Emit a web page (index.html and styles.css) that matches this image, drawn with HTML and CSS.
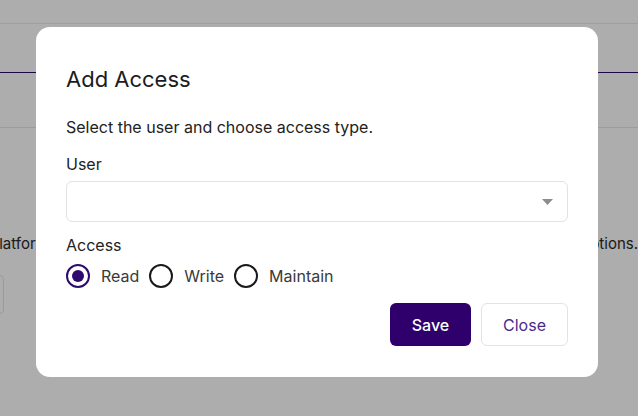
FILE: index.html
```html
<!DOCTYPE html>
<html>
<head>
<meta charset="utf-8">
<link rel="stylesheet" href="styles.css">
</head>
<body>
<div class="page">
  <div class="topbar"></div>
  <div class="tabs"></div>
  <div class="subbar"></div>
  <div class="intro">
    <span class="intro-left">platform to manage repository access</span>
    <span class="intro-right">settings and options.</span>
  </div>
  <div class="toolbar"><div class="ghost-btn"></div></div>
</div>
<div class="overlay">
  <div class="dialog">
    <h2 class="title">Add Access</h2>
    <p class="desc">Select the user and choose access type.</p>
    <label class="label">User</label>
    <div class="select">
      <svg class="caret" width="11" height="6" viewBox="0 0 11 6"><path d="M0 0h11L5.5 6z" fill="#8d8d8d"/></svg>
    </div>
    <label class="label label-access">Access</label>
    <div class="radios">
      <span class="radio checked"><span class="dot"></span></span><span class="rlabel">Read</span>
      <span class="radio"></span><span class="rlabel">Write</span>
      <span class="radio"></span><span class="rlabel">Maintain</span>
    </div>
    <div class="actions">
      <button class="btn btn-save">Save</button>
      <button class="btn btn-close">Close</button>
    </div>
  </div>
</div>
</body>
</html>
```

FILE: styles.css
```css
html, body {
  margin: 0;
  padding: 0;
  width: 638px;
  height: 416px;
  overflow: hidden;
  background: #ffffff;
  font-family: Inter, "Noto Sans", sans-serif;
}
.page {
  width: 638px;
  height: 416px;
  overflow: hidden;
}
.topbar {
  height: 23px;
  border-bottom: 1px solid #eaeaea;
}
.tabs {
  height: 48px;
  border-bottom: 1px solid #2e0a6e;
}
.subbar {
  height: 54px;
  border-bottom: 1px solid #e6e6e6;
}
.intro {
  display: flex;
  justify-content: space-between;
  white-space: nowrap;
  margin-top: 106px;
  font-size: 15px;
  color: #2a2a2a;
  height: 20px;
}
.intro-left { margin-left: -10px; }
.intro-right { margin-right: 0; flex-shrink: 0; }
.toolbar {
  margin-top: 21px;
}
.ghost-btn {
  width: 40px;
  height: 37px;
  margin-left: -38px;
  border: 1px solid #e4e4e4;
  border-radius: 4px;
}
.overlay {
  position: fixed;
  inset: 0;
  background: rgba(0, 0, 0, 0.32);
  display: flex;
  align-items: flex-start;
  justify-content: flex-start;
  padding: 27px 0 0 36px;
}
.dialog {
  width: 562px;
  height: 350px;
  box-sizing: border-box;
  background: #ffffff;
  border-radius: 14px;
  padding: 37px 30px 30px 30px;
  display: flex;
  flex-direction: column;
}
.title {
  margin: 0;
  font-size: 22px;
  font-weight: 400;
  line-height: 30px;
  color: #1c1c1c;
}
.desc {
  margin: 22px 0 0 0;
  font-size: 16px;
  line-height: 22px;
  color: #222;
}
.label {
  margin-top: 16px;
  font-size: 16px;
  line-height: 20px;
  color: #222;
}
.select {
  margin-top: 7px;
  height: 41px;
  box-sizing: border-box;
  border: 1px solid #e2e2e2;
  border-radius: 6px;
  display: flex;
  align-items: center;
  justify-content: flex-end;
  padding-right: 14px;
}
.label-access { margin-top: 13px; }
.radios {
  margin-top: 8px;
  display: flex;
  align-items: center;
  height: 26px;
}
.radio {
  width: 24px;
  height: 24px;
  box-sizing: border-box;
  border: 2px solid #1a1a1a;
  border-radius: 50%;
  display: flex;
  align-items: center;
  justify-content: center;
}
.radio.checked { border-color: #2e0a6e; }
.dot {
  width: 12px;
  height: 12px;
  border-radius: 50%;
  background: #2e0a6e;
}
.rlabel {
  margin: 0 10px 0 11px;
  font-size: 16px;
  color: #3a3a3a;
}
.actions {
  margin-top: 14px;
  display: flex;
  justify-content: flex-end;
  gap: 10px;
}
.btn {
  height: 43px;
  box-sizing: border-box;
  border-radius: 6px;
  font-family: Inter, "Noto Sans", sans-serif;
  font-size: 16px;
  padding: 0;
  cursor: pointer;
}
.btn-save {
  width: 81px;
  background: #2f006b;
  color: #ffffff;
  border: none;
  font-weight: 500;
}
.btn-close {
  width: 87px;
  background: #ffffff;
  color: #4b2a8c;
  border: 1px solid #e3e3e3;
}
```
